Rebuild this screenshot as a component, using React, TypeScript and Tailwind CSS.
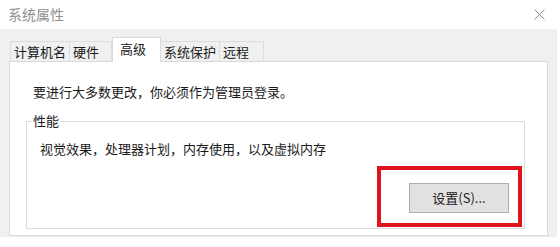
import React from "react";

const tabs = [
  { label: "计算机名", w: "w-[60px]", active: false },
  { label: "硬件", w: "w-[43px]", active: false },
  { label: "高级", w: "w-[49px]", active: true },
  { label: "系统保护", w: "w-[60px]", active: false },
  { label: "远程", w: "w-[45px]", active: false },
];

export default function App() {
  return (
    <div
      className="relative w-[560px] h-[247px] bg-white overflow-hidden text-[13px] text-[#1a1a1a]"
      style={{ fontFamily: '"Noto Sans CJK SC", "Noto Sans", sans-serif' }}
    >
      {/* title bar */}
      <div className="h-[29px] flex items-center justify-between pl-[8px] pr-[15px]">
        <span className="text-[14px] leading-[20px] text-[#8e8e8e] -mt-[2px]">系统属性</span>
        <svg width="11" height="11" viewBox="0 0 11 11" className="-mt-[1px]">
          <path d="M0.5 0.5 L10.5 10.5 M10.5 0.5 L0.5 10.5" stroke="#8c8c8c" strokeWidth="1" fill="none" />
        </svg>
      </div>

      {/* gray dialog body */}
      <div className="w-[557px] h-[208px] bg-[#f0f0f0] pt-[8px] flex flex-col">
        {/* tab strip */}
        <div className="flex items-end pl-[10px] h-[24px] relative z-10">
          {tabs.map((t) =>
            t.active ? (
              <div
                key={t.label}
                className={`${t.w} h-[25px] -mb-px bg-white border border-b-0 border-[#d9d9d9] pl-[7px] flex items-center leading-[18px] pb-[2px]`}
              >
                {t.label}
              </div>
            ) : (
              <div
                key={t.label}
                className={`${t.w} h-[20px] bg-[#f0f0f0] border border-b-0 border-[#dcdcdc] -ml-px first:ml-0 pl-[3px] flex items-center leading-[18px]`}
              >
                {t.label}
              </div>
            )
          )}
        </div>

        {/* tab panel */}
        <div className="ml-[9px] w-[539px] h-[175px] bg-white border border-[#d9d9d9] pt-[20px] pl-[23px]">
          <div className="leading-[20px]">要进行大多数更改，你必须作为管理员登录。</div>

          <fieldset className="mt-[11px] -ml-[7px] w-[499px] h-[116px] border border-[#dcdcdc] p-0 m-0">
            <legend className="ml-[5px] px-[1px] leading-[16px]">性能</legend>
            <div className="pt-[10px] pl-[13px] leading-[20px]">视觉效果，处理器计划，内存使用，以及虚拟内存</div>
            <div className="flex justify-end pr-[15px] mt-[24px]">
              <button className="w-[100px] h-[30px] bg-[#e1e1e1] border border-[#adadad] text-[13px] leading-[18px] text-[#1a1a1a] flex items-center justify-center">
                设置(S)...
              </button>
            </div>
          </fieldset>
        </div>
      </div>

      {/* red annotation box */}
      <div className="absolute left-[377px] top-[166px] w-[145px] h-[61px] border-4 border-[#e0121b]" />
    </div>
  );
}
